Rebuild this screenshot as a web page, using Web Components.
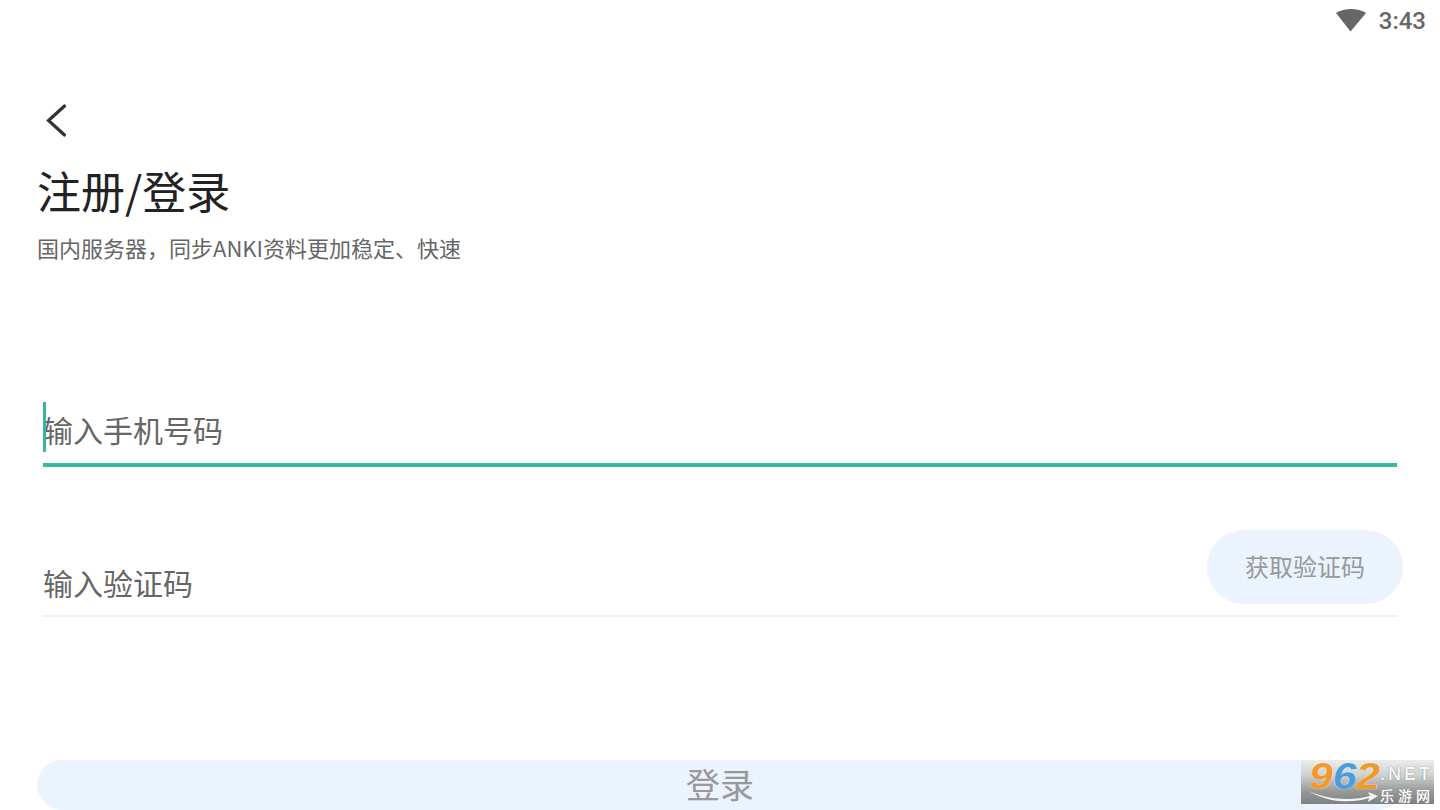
<!DOCTYPE html>
<html lang="zh">
<head>
<meta charset="utf-8">
<title>注册/登录</title>
<style>
  html, body { margin: 0; height: 100%; background: #fff; overflow: hidden; }
  body { font-family: "Noto Sans CJK SC", "Noto Sans", sans-serif; }
</style>
</head>
<body>
<login-page></login-page>

<script>
// status bar along the top edge
class StatusBar extends HTMLElement {
    constructor() {
        super();
        this.attachShadow({ mode: 'open' });
        this.shadowRoot.innerHTML = `
      <style>
        :host {
          display: flex;
          justify-content: flex-end;
          align-items: center;
          height: 42px;
          padding-right: 14px;
          color: #666;
          font-family: Roboto, sans-serif;
          font-size: 24px;
          font-weight: 500;
        }
        svg { display: block; margin-right: 12px; }
      </style>
      <svg width="32" height="24" viewBox="0 0 32 24">
        <path d="M1 4C9.500 -1.300 22.500 -1.300 31 4L15.500 22.500Z" fill="#666"/>
      </svg>
      <span><slot></slot></span>
    `;
    }
}

class BackHeader extends HTMLElement {
    constructor() {
        super();
        this.attachShadow({ mode: 'open' });
        this.shadowRoot.innerHTML = `
      <style>
        :host { display: block; padding-left: 37px; color: #222; }
        .back { display: block; margin: 58px 0 0 7px; }
        h1 {
          margin: 19px 0 0;
          font-size: 44px;
          line-height: 62px;
          font-weight: 400;
          letter-spacing: 0;
        }
        p {
          margin: 10px 0 0;
          font-size: 22px;
          line-height: 32px;
          color: #666;
        }
      </style>
      <svg class="back" width="24" height="40" viewBox="0 0 24 40" fill="none">
        <path d="M20.500 6 4.500 20.500 20.500 35" stroke="#333" stroke-width="3.200" stroke-linecap="round" stroke-linejoin="miter"/>
      </svg>
      <h1><slot name="title"></slot></h1>
      <p><slot name="sub"></slot></p>
    `;
    }
}

// input row; "focused" gives the teal caret and underline
class FormField extends HTMLElement {
    constructor() {
        super();
        this.attachShadow({ mode: 'open' });
        this.shadowRoot.innerHTML = `
      <style>
        :host {
          display: flex;
          align-items: flex-end;
          position: relative;
          margin: 0 43px;
          border-bottom: 2px solid #eef3f6;
          color: #666;
          font-size: 30px;
        }
        :host([focused]) { border-bottom: 4px solid #36b7a1; }
        .label { flex: 1; line-height: 44px; padding: 5px 0 11px; }
        :host([focused]) .label { padding-bottom: 12px; }
        .caret { display: none; position: absolute; left: 0; top: 0; width: 3px; height: 50px; background: #36b7a1; }
        :host([focused]) .caret { display: block; }
        ::slotted(pill-button) { position: absolute; right: -6px; bottom: 11px; }
      </style>
      <span class="caret"></span>
      <span class="label"><slot></slot></span>
      <slot name="action"></slot>
    `;
    }
}

class PillButton extends HTMLElement {
    constructor() {
        super();
        this.attachShadow({ mode: 'open' });
        this.shadowRoot.innerHTML = `
      <style>
        :host {
          display: flex;
          align-items: center;
          justify-content: center;
          box-sizing: border-box;
          background: #ebf3fe;
          color: #999;
          border-radius: 999px;
          font-family: "Noto Sans CJK SC", sans-serif;
        }
      </style>
      <slot></slot>
    `;
    }
}

// site watermark in the bottom right corner
class SiteMark extends HTMLElement {
    constructor() {
        super();
        this.attachShadow({ mode: 'open' });
        this.shadowRoot.innerHTML = `
      <style>
        :host {
          display: block;
          position: absolute;
          left: 1301px;
          top: 760px;
          width: 133px;
          height: 44px;
          background: linear-gradient(#ebecec 0%, #cfd1d0 35%, #979a99 70%, #7d8180 100%);
        }
        .num, .net, .cn { position: absolute; white-space: nowrap; }
        .num {
          left: 8px;
          top: 2px;
          font: italic 700 36px/30px "Liberation Sans", sans-serif;
          color: #ef9a2e;
          transform: scaleX(1.180);
          transform-origin: left center;
          text-shadow: 0 0 1px #fff;
        }
        .num b { font-weight: 700; color: #4a9ede; }
        .net {
          left: 79px;
          top: 7px;
          font: 700 18px/15px "Liberation Sans", sans-serif;
          letter-spacing: 3px;
          color: #f4f4f4;
          text-shadow: 0 0 1px #555;
        }
        .cn {
          left: 79px;
          top: 27px;
          font: 500 14px/16px "Noto Sans CJK SC", sans-serif;
          letter-spacing: 4px;
          color: #fff;
        }
        svg { position: absolute; left: 7px; top: 30px; }
      </style>
      <span class="num">9<b>6</b>2</span>
      <span class="net">.NET</span>
      <svg width="72" height="14" viewBox="0 0 72 14">
        <path d="M1 1C20 10 44 11 62 6L60 2 70 6 60 12 61 8C42 14 18 12 1 1Z" fill="#f4f4f4"/>
      </svg>
      <span class="cn">乐游网</span>
    `;
    }
}

class LoginPage extends HTMLElement {
    constructor() {
        super();
        this.attachShadow({ mode: 'open' });
        this.shadowRoot.innerHTML = `
      <style>
        :host { display: block; position: relative; width: 1440px; height: 810px; overflow: hidden; }
        .phone { margin-top: 139px; }
        .code { margin-top: 88px; }
        .verify-btn { width: 196px; height: 74px; font-size: 24px; padding-bottom: 4px; }
        .submit {
          position: absolute;
          left: 37px;
          top: 760px;
          width: 1366px;
          height: 50px;
          font-size: 34px;
          padding-bottom: 3px;
        }
      </style>
      <status-bar>3:43</status-bar>
      <back-header>
        <span slot="title">注册/登录</span>
        <span slot="sub">国内服务器，同步ANKI资料更加稳定、快速</span>
      </back-header>
      <form-field class="phone" focused>输入手机号码</form-field>
      <form-field class="code">输入验证码
        <pill-button class="verify-btn" slot="action">获取验证码</pill-button>
      </form-field>
      <pill-button class="submit">登录</pill-button>
      <site-mark></site-mark>
    `;
    }
}

customElements.define('status-bar', StatusBar);
customElements.define('back-header', BackHeader);
customElements.define('form-field', FormField);
customElements.define('pill-button', PillButton);
customElements.define('site-mark', SiteMark);
customElements.define('login-page', LoginPage);
</script>
</body>
</html>
